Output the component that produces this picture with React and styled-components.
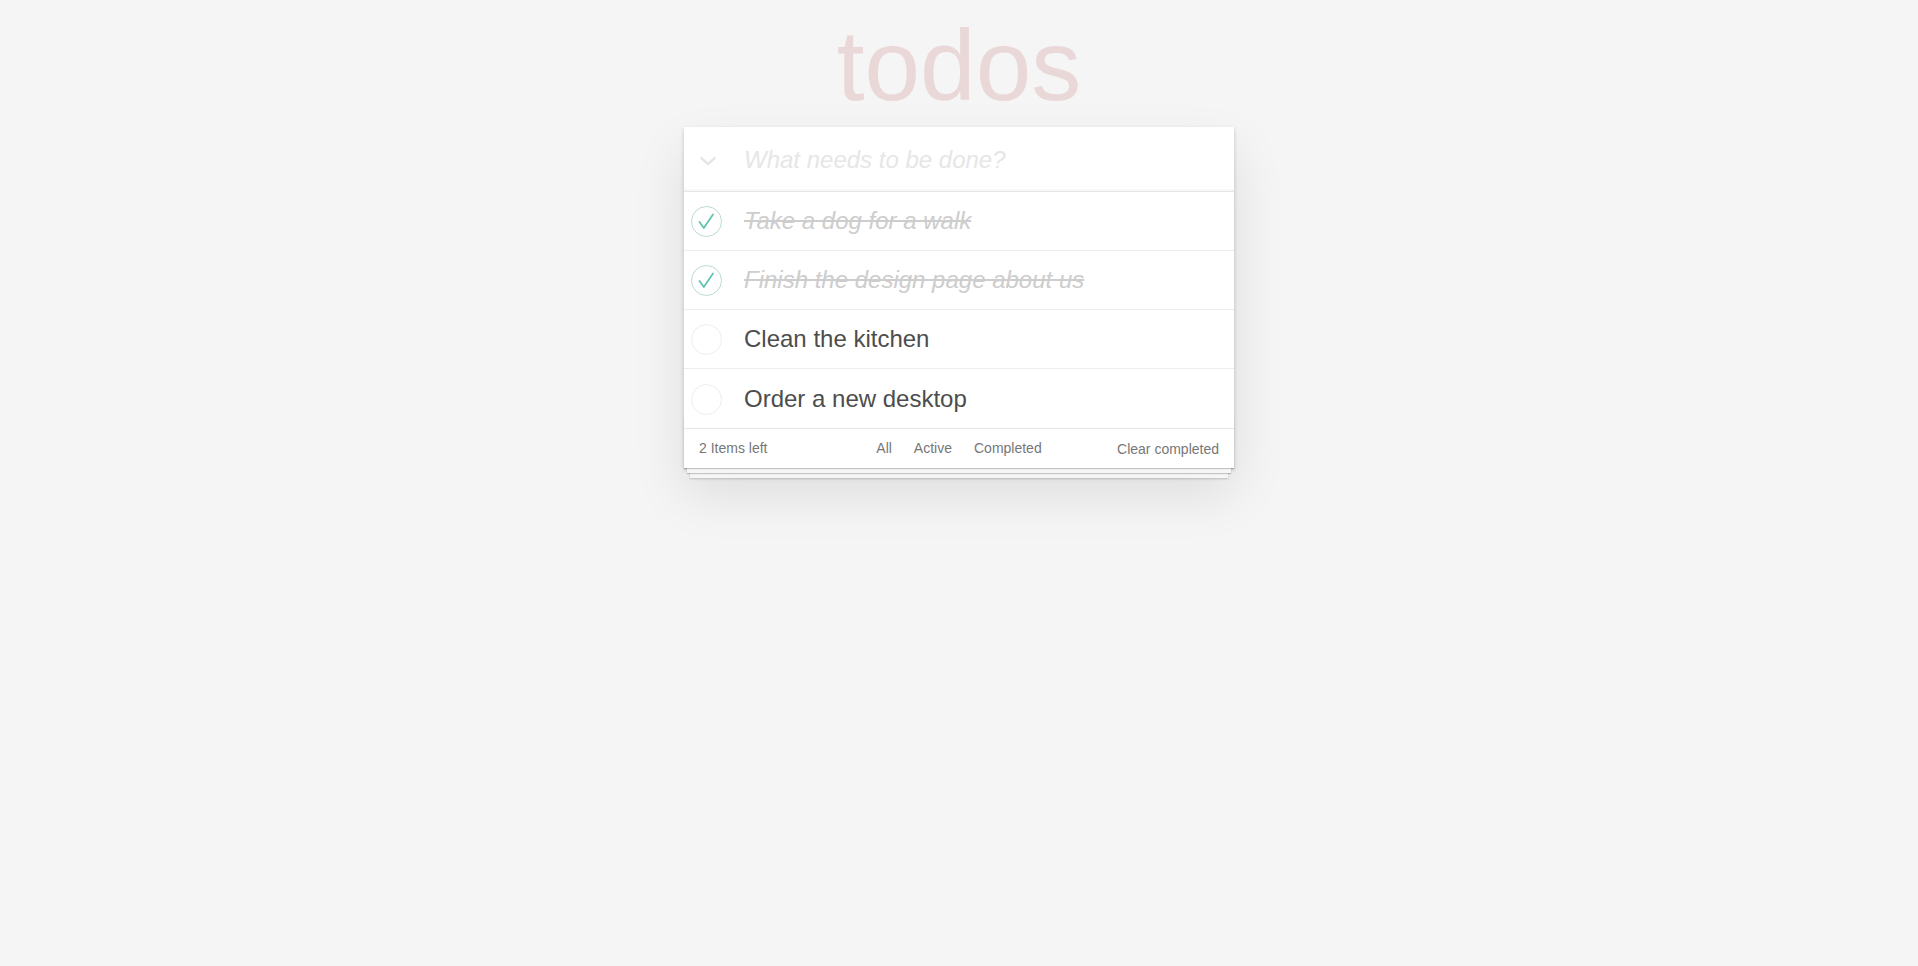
import React from 'react'
import styled, { createGlobalStyle } from 'styled-components'

const todos = [
  { id: 1, title: 'Take a dog for a walk', completed: true },
  { id: 2, title: 'Finish the design page about us', completed: true },
  { id: 3, title: 'Clean the kitchen', completed: false },
  { id: 4, title: 'Order a new desktop', completed: false },
]

const filters = ['All', 'Active', 'Completed']

const Toggle = ({ checked }) => (
  <ToggleBox>
    <svg width="31" height="31" viewBox="0 0 31 31">
      <circle
        cx="15.5"
        cy="15.5"
        r="15"
        fill="none"
        stroke={checked ? '#bddad5' : '#ededed'}
        strokeWidth="1"
      />
      {checked && (
        <polyline
          points="8.5,16 12.8,22 22,8.5"
          fill="none"
          stroke="#5dc2af"
          strokeWidth="1.7"
          strokeLinecap="round"
          strokeLinejoin="round"
        />
      )}
    </svg>
  </ToggleBox>
)

const App = () => {
  const left = todos.filter(t => !t.completed).length

  return (
    <>
      <GlobalStyle />
      <Page>
        <Title>todos</Title>
        <TodoApp>
          <Header>
            <ToggleAll>
              <svg width="18" height="10" viewBox="0 0 18 10">
                <polyline
                  points="1.5,1.5 9,8 16.5,1.5"
                  fill="none"
                  stroke="#e6e6e6"
                  strokeWidth="2.4"
                />
              </svg>
            </ToggleAll>
            <NewTodo placeholder="What needs to be done?" />
          </Header>
          <List>
            {todos.map(todo => (
              <Item key={todo.id}>
                <Toggle checked={todo.completed} />
                <Label $completed={todo.completed}>{todo.title}</Label>
              </Item>
            ))}
          </List>
          <Footer>
            <Count>{left} Items left</Count>
            <Filters>
              {filters.map(f => (
                <FilterLink key={f}>{f}</FilterLink>
              ))}
            </Filters>
            <ClearButton>Clear completed</ClearButton>
          </Footer>
        </TodoApp>
      </Page>
    </>
  )
}

const GlobalStyle = createGlobalStyle`
  html, body {
    margin: 0;
    padding: 0;
  }

  body {
    background: #f5f5f5;
    font-family: 'Liberation Sans', Arial, sans-serif;
    font-size: 14px;
    line-height: 1.4em;
    color: #4d4d4d;
    -webkit-font-smoothing: antialiased;
  }
`

const Page = styled.div`
  width: 550px;
  margin: 0 auto;
  padding-top: 15px;
  min-height: 951px;
`

const Title = styled.h1`
  margin: 0 0 12px;
  height: 100px;
  font-size: 100px;
  line-height: 100px;
  font-weight: 100;
  text-align: center;
  color: rgba(175, 47, 47, 0.15);
`

const TodoApp = styled.section`
  position: relative;
  background: #fff;
  box-shadow: 0 2px 4px 0 rgba(0, 0, 0, 0.2),
    0 25px 50px 0 rgba(0, 0, 0, 0.1);
`

const Header = styled.header`
  display: flex;
  align-items: center;
  height: 64px;
  border-bottom: 1px solid #e6e6e6;
  box-shadow: inset 0 -2px 1px rgba(0, 0, 0, 0.03);
`

const ToggleAll = styled.div`
  width: 60px;
  display: flex;
  justify-content: flex-start;
  padding-left: 15px;
  box-sizing: border-box;

  svg {
    display: block;
    margin-top: 4px;
  }
`

const NewTodo = styled.input`
  flex: 1;
  border: none;
  outline: none;
  background: transparent;
  padding: 2px 16px 0 0;
  font-family: inherit;
  font-size: 24px;
  color: #4d4d4d;

  &::placeholder {
    font-style: italic;
    color: #e6e6e6;
  }
`

const List = styled.ul`
  margin: 0;
  padding: 0;
  list-style: none;
`

const Item = styled.li`
  display: flex;
  align-items: center;
  height: 58px;
  padding-top: 1px;
  box-sizing: border-box;
  height: 59px;
  border-bottom: 1px solid #ededed;

  &:last-child {
    border-bottom: none;
  }
`

const ToggleBox = styled.div`
  width: 60px;
  padding-left: 7px;
  box-sizing: border-box;

  svg {
    display: block;
  }
`

const Label = styled.label`
  font-size: 24px;
  line-height: 1.2;
  color: ${p => (p.$completed ? '#cdcdcd' : '#4d4d4d')};
  font-style: ${p => (p.$completed ? 'italic' : 'normal')};
  text-decoration: ${p => (p.$completed ? 'line-through' : 'none')};
`

const Footer = styled.footer`
  position: relative;
  display: grid;
  grid-template-columns: 1fr auto 1fr;
  align-items: center;
  height: 39px;
  padding: 0 15px;
  border-top: 1px solid #e6e6e6;
  color: #777;
  font-size: 14px;
  line-height: 20px;

  &:before {
    content: '';
    position: absolute;
    right: 0;
    bottom: 0;
    left: 0;
    height: 50px;
    overflow: hidden;
    pointer-events: none;
    box-shadow: 0 1px 1px rgba(0, 0, 0, 0.2),
      0 8px 0 -3px #f6f6f6,
      0 9px 1px -3px rgba(0, 0, 0, 0.2),
      0 16px 0 -6px #f6f6f6,
      0 17px 2px -6px rgba(0, 0, 0, 0.2);
  }
`

const Count = styled.span`
  justify-self: start;
  margin-top: -1px;
`

const Filters = styled.ul`
  display: flex;
  margin: -1px 0 0;
  padding: 0;
  list-style: none;
`

const FilterLink = styled.li`
  margin: 3px;
  padding: 3px 7px;
  border: 1px solid transparent;
  border-radius: 3px;
  color: inherit;
`

const ClearButton = styled.button`
  justify-self: end;
  border: none;
  background: none;
  padding: 0;
  font-family: inherit;
  font-size: 14px;
  line-height: 20px;
  color: #777;
  cursor: pointer;
`

export default App
